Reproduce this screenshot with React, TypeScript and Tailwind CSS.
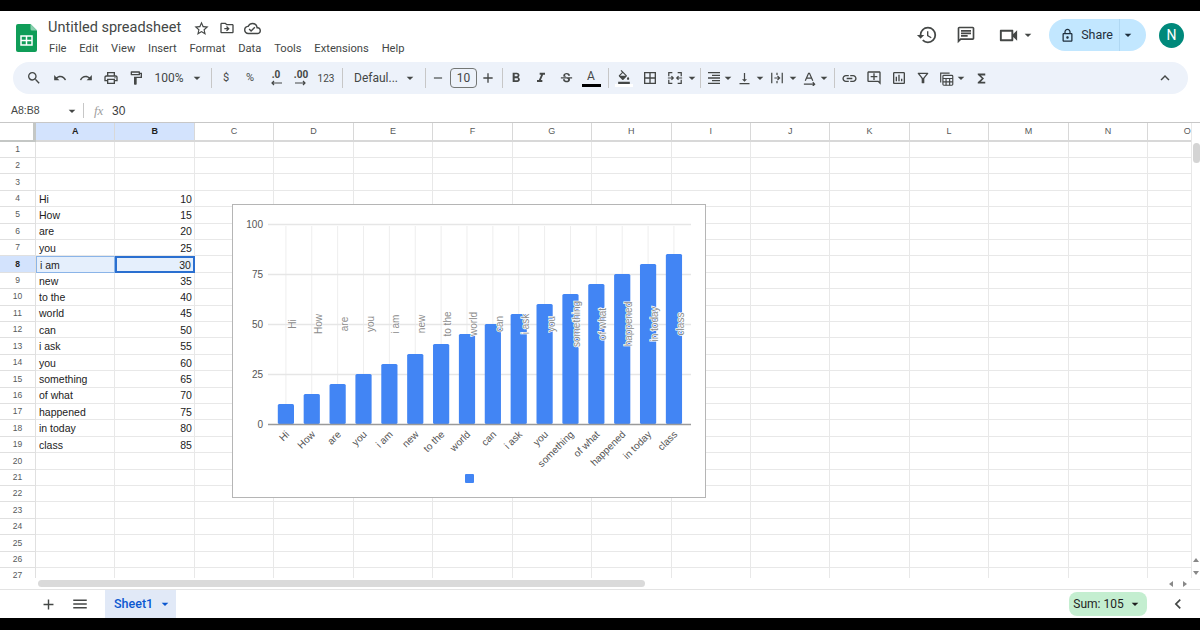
import type { ReactNode } from "react";
import {
  MdAdd,
  MdArrowDropDown,
  MdBorderAll,
  MdChevronLeft,
  MdFormatAlignLeft,
  MdFormatBold,
  MdFormatColorFill,
  MdFormatItalic,
  MdFunctions,
  MdHistory,
  MdKeyboardArrowUp,
  MdLink,
  MdMenu,
  MdOutlineAddComment,
  MdOutlineChat,
  MdOutlineCloudDone,
  MdOutlineDriveFileMove,
  MdOutlineFilterAlt,
  MdOutlineFormatPaint,
  MdOutlineInsertChart,
  MdOutlineLocalPrintshop,
  MdOutlineLock,
  MdOutlineVideocam,
  MdRedo,
  MdRemove,
  MdSearch,
  MdStarBorder,
  MdStrikethroughS,
  MdUndo,
  MdVerticalAlignBottom,
} from "react-icons/md";

const menus = ["File", "Edit", "View", "Insert", "Format", "Data", "Tools", "Extensions", "Help"];
const columns = ["A", "B", "C", "D", "E", "F", "G", "H", "I", "J", "K", "L", "M", "N", "O"];
const words = [
  "Hi",
  "How",
  "are",
  "you",
  "i am",
  "new",
  "to the",
  "world",
  "can",
  "i ask",
  "you",
  "something",
  "of what",
  "happened",
  "in today",
  "class",
];
const rowCount = 27;

const Cell = ({ className, children }: { className: string; children?: ReactNode }) => (
  <div className={`flex shrink-0 items-center justify-center [&>svg]:shrink-0 ${className}`}>{children}</div>
);

const Sep = () => <div className="h-[20px] w-px shrink-0 bg-[#c7c7c7]" />;

const Caret = ({ size = 16 }: { size?: number }) => <MdArrowDropDown size={size} className="shrink-0" />;

const MergeIcon = () => (
  <svg width="16" height="16" viewBox="0 0 18 18" fill="none" stroke="#444746" strokeWidth="1.4">
    <path d="M2 7V3h4M2 11v4h4M16 7V3h-4M16 11v4h-4M1 9h6M17 9h-6M5 7l2 2-2 2M13 7l-2 2 2 2" />
  </svg>
);

const WrapIcon = () => (
  <svg width="14" height="14" viewBox="0 0 16 16" fill="none" stroke="#444746" strokeWidth="1.4">
    <path d="M2 2v12M14 2v12M5 8h6M8.500 5.500 11 8l-2.500 2.500M8 2v2.500M8 11.500V14" />
  </svg>
);

const RotateIcon = () => (
  <svg width="15" height="15" viewBox="0 0 16 16" fill="none" stroke="#444746" strokeWidth="1.3">
    <path d="M3.500 10.500 7 2.500h1l3.500 8M5 7.500h5M2 14h11M11.500 12l2 2-2 2" />
  </svg>
);

const FunctionTableIcon = () => (
  <svg width="17" height="17" viewBox="0 0 19 19" fill="none" stroke="#444746" strokeWidth="1.3">
    <path d="M3 14V3.500h10" />
    <rect x="5.500" y="6" width="11" height="11" rx="1" />
    <path d="M5.500 9.500h11M9 9.500V17M13 9.500V17M5.500 13.300h11" />
  </svg>
);

const DecimalIcon = ({ label, arrow }: { label: string; arrow: string }) => (
  <div className="flex flex-col items-center font-['Roboto',sans-serif] text-[10px] leading-[10px] font-bold">
    <span>{label}</span>
    <svg width="12" height="6" viewBox="0 0 12 6" fill="none" stroke="#444746" strokeWidth="1.200">
      <path d={arrow} />
    </svg>
  </div>
);

const Logo = () => (
  <svg width="21" height="28" viewBox="0 0 21 28" className="shrink-0">
    <path d="M2 0h12.500L21 6.500V26a2 2 0 0 1-2 2H2a2 2 0 0 1-2-2V2a2 2 0 0 1 2-2z" fill="#0f9d58" />
    <path d="M14.500 0 21 6.500h-5a1.500 1.500 0 0 1-1.500-1.500z" fill="#87ceac" />
    <rect x="5" y="12" width="11" height="9" fill="none" stroke="#fff" strokeWidth="1.500" />
    <path d="M5 16.500h11M10.500 12v9" stroke="#fff" strokeWidth="1.500" />
  </svg>
);

const Header = () => (
  <div className="flex h-[51px] shrink-0 items-center bg-white text-[#444746]">
    <div className="mt-[3px] ml-[16px]">
      <Logo />
    </div>
    <div className="mt-[3px] ml-[11px] flex flex-col">
      <div className="flex h-[20px] items-center">
        <span className="w-[144px] font-['Roboto',sans-serif] text-[14.500px] whitespace-nowrap text-[#444746]">
          Untitled spreadsheet
        </span>
        <MdStarBorder size={17} className="ml-[1px]" />
        <MdOutlineDriveFileMove size={16} className="ml-[9px]" />
        <MdOutlineCloudDone size={17} className="ml-[9px]" />
      </div>
      <div className="mt-[2px] ml-px flex h-[18px] items-center gap-[12.800px] font-['Roboto',sans-serif] text-[11.200px] text-[#444746]">
        {menus.map((m) => (
          <span key={m}>{m}</span>
        ))}
      </div>
    </div>
    <div className="mb-[3px] ml-auto flex items-center">
      <MdHistory size={22} />
      <MdOutlineChat size={20} className="ml-[18px]" />
      <MdOutlineVideocam size={23} className="ml-[21px]" />
      <Caret />
      <div className="ml-[13px] flex h-[32px] w-[97px] items-center rounded-full bg-[#c2e7ff] text-[#1f2f3d]">
        <div className="flex w-[71px] items-center justify-end gap-[6px] border-r border-[#b0d8f3] pr-[6px] font-['Roboto',sans-serif] text-[12.500px] leading-[32px]">
          <MdOutlineLock size={15} />
          <span>Share</span>
        </div>
        <Caret />
      </div>
      <div className="mr-[16px] ml-[13px] flex h-[25px] w-[25px] items-center justify-center rounded-full bg-[#00897b] font-['Roboto',sans-serif] text-[14px] text-white">
        N
      </div>
    </div>
  </div>
);

const Toolbar = () => (
  <div className="ml-[13px] flex h-[32px] w-[1175px] shrink-0 items-center rounded-full bg-[#edf2fa] pl-[8px] font-['Roboto',sans-serif] text-[#444746]">
    <Cell className="w-[26px]"><MdSearch size={16} /></Cell>
    <Cell className="w-[26px]"><MdUndo size={14} /></Cell>
    <Cell className="w-[25px]"><MdRedo size={14} /></Cell>
    <Cell className="w-[25px]"><MdOutlineLocalPrintshop size={16} /></Cell>
    <Cell className="w-[25px]"><MdOutlineFormatPaint size={16} /></Cell>
    <Cell className="w-[42px] text-[12px]">100%</Cell>
    <Cell className="w-[14px]"><Caret /></Cell>
    <Cell className="w-[14px]"><Sep /></Cell>
    <Cell className="w-[16px] text-[11px]">$</Cell>
    <Cell className="w-[32px] text-[11px]">%</Cell>
    <Cell className="w-[20px]"><DecimalIcon label=".0" arrow="M12 3H2M4 1 2 3l2 2" /></Cell>
    <Cell className="w-[30px]"><DecimalIcon label=".00" arrow="M0 3h10M8 1l2 2-2 2" /></Cell>
    <Cell className="w-[20px] text-[10px]">123</Cell>
    <Cell className="w-[12px]"><Sep /></Cell>
    <Cell className="w-[54px] justify-start text-[12px]"><span className="ml-[6px]">Defaul...</span></Cell>
    <Cell className="w-[16px]"><Caret /></Cell>
    <Cell className="w-[14px]"><Sep /></Cell>
    <Cell className="w-[12px]"><MdRemove size={14} /></Cell>
    <Cell className="ml-[6px] h-[20px] w-[27px] rounded-[4px] border border-[#747775] text-[12px]">10</Cell>
    <Cell className="w-[22px]"><MdAdd size={16} /></Cell>
    <Cell className="w-[6px]"><Sep /></Cell>
    <Cell className="w-[22px]"><MdFormatBold size={16} /></Cell>
    <Cell className="w-[28px]"><MdFormatItalic size={16} /></Cell>
    <Cell className="w-[22px]"><MdStrikethroughS size={15} /></Cell>
    <Cell className="w-[28px]">
      <div className="flex flex-col items-center">
        <span className="text-[12px] leading-[13px]">A</span>
        <div className="mt-[1px] h-[3px] w-[19px] bg-black" />
      </div>
    </Cell>
    <Cell className="w-[6px]"><Sep /></Cell>
    <Cell className="w-[26px]">
      <div className="flex flex-col items-center">
        <MdFormatColorFill size={14} />
        <div className="h-[3px] w-[18px] bg-white" />
      </div>
    </Cell>
    <Cell className="w-[26px]"><MdBorderAll size={16} /></Cell>
    <Cell className="w-[24px]"><MergeIcon /></Cell>
    <Cell className="w-[10px]"><Caret /></Cell>
    <Cell className="w-[6px]"><Sep /></Cell>
    <Cell className="w-[22px]"><MdFormatAlignLeft size={16} className="-scale-x-100" /></Cell>
    <Cell className="w-[6px]"><Caret /></Cell>
    <Cell className="w-[26px]"><MdVerticalAlignBottom size={15} /></Cell>
    <Cell className="w-[6px]"><Caret /></Cell>
    <Cell className="w-[28px]"><WrapIcon /></Cell>
    <Cell className="w-[4px]"><Caret /></Cell>
    <Cell className="w-[28px]"><RotateIcon /></Cell>
    <Cell className="w-[2px]"><Caret /></Cell>
    <Cell className="w-[18px]"><Sep /></Cell>
    <Cell className="w-[12px]"><MdLink size={17} /></Cell>
    <Cell className="w-[38px]"><MdOutlineAddComment size={16} /></Cell>
    <Cell className="w-[12px]"><MdOutlineInsertChart size={16} /></Cell>
    <Cell className="w-[36px]"><MdOutlineFilterAlt size={16} /></Cell>
    <Cell className="w-[10px]"><FunctionTableIcon /></Cell>
    <Cell className="w-[20px]"><Caret /></Cell>
    <Cell className="w-[20px]"><MdFunctions size={15} /></Cell>
    <Cell className="mr-[14px] ml-auto w-[18px]"><MdKeyboardArrowUp size={18} /></Cell>
  </div>
);

const FormulaBar = () => (
  <div className="flex h-[29px] shrink-0 items-center border-b border-[#c7c7c7] pt-[5px] font-['Liberation_Sans',Arial,sans-serif] text-[#444746]">
    <span className="ml-[11px] w-[53px] text-[10.500px]">A8:B8</span>
    <Caret />
    <div className="ml-[3px] h-[15px] w-px bg-[#c7c7c7]" />
    <span className="ml-[10px] w-[18px] font-['Liberation_Serif',serif] text-[13px] text-[#a0a0a0] italic">fx</span>
    <span className="text-[12px] text-[#3c3c3c]">30</span>
  </div>
);

const Grid = () => {
  const rows = Array.from({ length: rowCount }, (_, i) => i + 1);
  return (
    <div className="grid min-w-0 flex-1 auto-rows-[16.420px] grid-cols-[36px_repeat(15,79.450px)] grid-rows-[18.500px] content-start overflow-hidden font-['Liberation_Sans',Arial,sans-serif] text-[10.500px] text-[#222]">
      <div className="border-r-[3px] border-b-2 border-[#c4c7c5] bg-white" />
      {columns.map((c, i) => (
        <div
          key={c}
          className={`flex items-center justify-center border-r border-b-2 border-[#d8d8d8] pt-px text-[9px] ${
            i < 2 ? "bg-[#d3e3fd] font-bold text-[#1f1f1f]" : "bg-white text-[#575a5a]"
          }`}
        >
          {c}
        </div>
      ))}
      {rows.map((r) => {
        const word = r >= 4 && r <= 19 ? words[r - 4] : "";
        const value = word ? String((r - 2) * 5) : "";
        const active = r === 8;
        return [
          <div
            key={`h${r}`}
            className={`flex items-center justify-center border-r border-b border-[#e0e0e0] text-[8.500px] ${
              active ? "bg-[#d3e3fd] font-bold text-[#1f1f1f]" : "bg-white text-[#575a5a]"
            }`}
          >
            {r}
          </div>,
          <div
            key={`a${r}`}
            className={`flex items-center px-[3px] pt-[2px] ${
              active ? "border border-[#8ab4e8] bg-[#e5effc]" : "border-r border-b border-[#e8e8e8]"
            }`}
          >
            {word}
          </div>,
          <div
            key={`b${r}`}
            className={`flex items-center justify-end px-[2px] pt-[2px] ${
              active ? "border-2 border-[#2a6fd0] bg-[#e5effc]" : "border-r border-b border-[#e8e8e8]"
            }`}
          >
            {value}
          </div>,
          ...columns.slice(2).map((c) => <div key={`${c}${r}`} className="border-r border-b border-[#e8e8e8]" />),
        ];
      })}
    </div>
  );
};

const Chart = () => {
  const ys = [100, 75, 50, 25];
  const centers = words.map((_, i) => 285.9 + i * 25.87);
  return (
    <div className="absolute top-[81px] left-[232px] h-[294px] w-[474px] border border-[#b5b5b5] bg-white">
      <svg width="472" height="292" viewBox="233 205 472 292" fontFamily="'Liberation Sans', Arial, sans-serif">
        {centers.map((x) => (
          <line key={x} x1={x} y1="226" x2={x} y2="424" stroke="#eeeeee" />
        ))}
        {ys.map((v) => (
          <line key={v} x1="268" y1={424.5 - v * 2} x2="691" y2={424.5 - v * 2} stroke="#e6e6e6" strokeWidth="1.400" />
        ))}
        {words.map((w, i) => (
          <rect key={i} x={centers[i] - 8.1} y={424 - (10 + i * 5) * 2} width="16.200" height={(10 + i * 5) * 2} rx="1.500" fill="#4285f4" />
        ))}
        <line x1="268" y1="424.500" x2="691" y2="424.500" stroke="#9a9a9a" strokeWidth="1.500" />
        {[100, 75, 50, 25, 0].map((v) => (
          <text key={v} x="263" y={428 - v * 2} textAnchor="end" fontSize="10" fill="#555">
            {v}
          </text>
        ))}
        {words.map((w, i) => (
          <text
            key={i}
            transform={`translate(${centers[i] + 10} 324) rotate(-90)`}
            textAnchor="middle"
            fontSize="10"
            fill="#8c8c8c"
            stroke="#ffffff"
            strokeWidth="1.500"
            paintOrder="stroke"
          >
            {w}
          </text>
        ))}
        {words.map((w, i) => (
          <text
            key={i}
            transform={`translate(${centers[i] + 4} 435) rotate(-45)`}
            textAnchor="end"
            fontSize="10"
            fill="#555"
          >
            {w}
          </text>
        ))}
        <rect x="465" y="474" width="9" height="9" rx="1" fill="#4285f4" />
      </svg>
    </div>
  );
};

const VerticalScrollbar = () => (
  <div className="flex w-[9px] shrink-0 flex-col items-center border-l border-[#e8e8e8] bg-white pt-[20px]">
    <div className="h-[20px] w-[7px] rounded-full bg-[#d4d4d4]" />
    <div className="mt-auto mb-[1px] h-0 w-0 border-x-[3px] border-b-[4px] border-x-transparent border-b-[#888]" />
    <div className="mt-[8px] mb-[3px] h-0 w-0 border-x-[3px] border-t-[4px] border-x-transparent border-t-[#888]" />
  </div>
);

const HorizontalScrollbar = () => (
  <div className="flex h-[11px] shrink-0 items-center bg-white pl-[38px]">
    <div className="h-[7px] w-[607px] rounded-full bg-[#dadada]" />
    <div className="ml-auto flex items-center gap-[10px] pr-[13px]">
      <div className="h-0 w-0 border-y-[3px] border-r-[4px] border-y-transparent border-r-[#888]" />
      <div className="h-0 w-0 border-y-[3px] border-l-[4px] border-y-transparent border-l-[#888]" />
    </div>
  </div>
);

const BottomBar = () => (
  <div className="flex h-[29px] shrink-0 items-center border-t border-[#e3e3e3] bg-white font-['Roboto',sans-serif] text-[#444746]">
    <MdAdd size={17} className="ml-[40px]" />
    <MdMenu size={18} className="ml-[14px]" />
    <div className="ml-[16px] flex h-full w-[71px] items-center bg-[#e1e9f7] pl-[9px] text-[12.500px] font-medium text-[#0b57d0]">
      Sheet1
      <MdArrowDropDown size={16} className="ml-[4px]" />
    </div>
    <div className="ml-auto flex h-[24px] w-[78px] items-center justify-center rounded-[8px] bg-[#c4eed0] text-[12px] text-[#1f1f1f]">
      Sum: 105
      <MdArrowDropDown size={16} className="ml-[3px]" />
    </div>
    <MdChevronLeft size={20} className="mr-[12px] ml-[21px]" />
  </div>
);

export default function App() {
  return (
    <div className="flex h-[630px] w-[1200px] flex-col overflow-hidden bg-white">
      <div className="h-[11px] shrink-0 bg-black" />
      <Header />
      <Toolbar />
      <FormulaBar />
      <div className="relative flex min-h-0 flex-1">
        <Grid />
        <VerticalScrollbar />
        <Chart />
      </div>
      <HorizontalScrollbar />
      <BottomBar />
      <div className="h-[12px] shrink-0 bg-black" />
    </div>
  );
}
